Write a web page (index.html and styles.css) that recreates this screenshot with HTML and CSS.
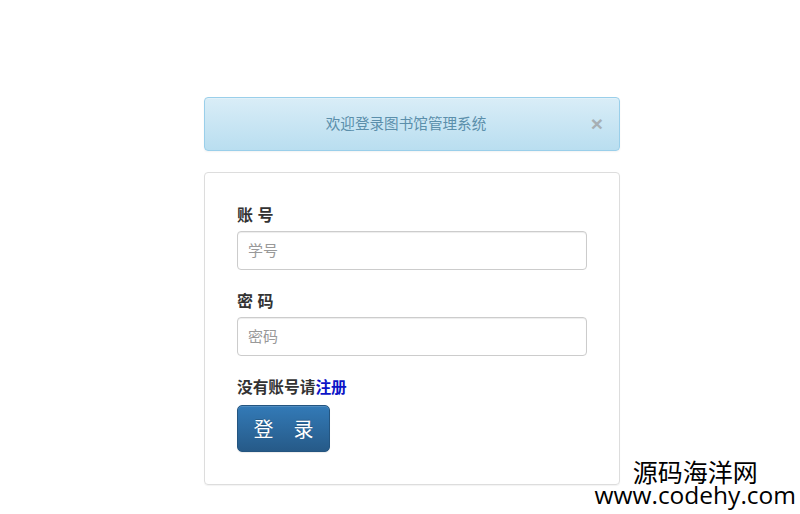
FILE: index.html
```html
<!DOCTYPE html>
<html lang="zh-CN">
<head>
    <meta charset="UTF-8">
    <meta name="viewport" content="width=device-width, initial-scale=1.0">
    <title>图书馆管理系统 - 登录</title>
    <link rel="stylesheet" href="styles.css">
</head>
<body>
    <div class="login-wrap">
        <div class="alert-info">
            欢迎登录图书馆管理系统
            <button class="close" type="button">&times;</button>
        </div>

        <form class="login-panel">
            <div class="form-group">
                <label>账 号</label>
                <input type="text" class="form-control" placeholder="学号">
            </div>
            <div class="form-group">
                <label>密 码</label>
                <input type="password" class="form-control" placeholder="密码">
            </div>
            <p class="register-tip">没有账号请<a href="#">注册</a></p>
            <button type="submit" class="btn-login">登　录</button>
        </form>
    </div>

    <div class="watermark">
        <div class="wm-name">源码海洋网</div>
        <div class="wm-url">www.codehy.com</div>
    </div>
</body>
</html>
```

FILE: styles.css
```css
* {
    margin: 0;
    padding: 0;
    box-sizing: border-box;
}

body {
    font-family: "Liberation Sans", "Noto Sans CJK SC", sans-serif;
    background: #fff;
    color: #333;
    width: 800px;
    height: 514px;
    position: relative;
    overflow: hidden;
}

.login-wrap {
    width: 416px;
    margin: 97px 0 0 204px;
}

.alert-info {
    position: relative;
    height: 54px;
    line-height: 52px;
    padding-right: 12px;
    text-align: center;
    font-size: 14.6px;
    color: #5b8fab;
    background: linear-gradient(to bottom, #d9edf7 0%, #b9def0 100%);
    border: 1px solid #9acfea;
    border-radius: 4px;
    box-shadow: inset 0 1px 0 rgba(255, 255, 255, 0.25), 0 1px 2px rgba(0, 0, 0, 0.05);
}

.close {
    position: absolute;
    right: 16px;
    top: 0;
    line-height: 52px;
    background: none;
    border: none;
    font-family: "Liberation Sans", sans-serif;
    font-size: 21px;
    font-weight: bold;
    color: #999;
    opacity: 0.7;
    cursor: pointer;
}

.login-panel {
    margin-top: 21px;
    padding: 33px 32px 32px;
    border: 1px solid #ddd;
    border-radius: 4px;
    box-shadow: 0 1px 1px rgba(0, 0, 0, 0.05);
}

.form-group {
    margin-bottom: 22px;
}

.form-group label {
    display: block;
    font-size: 16px;
    line-height: 20px;
    font-weight: bold;
    color: #333;
    margin-bottom: 5px;
}

.form-control {
    display: block;
    width: 100%;
    height: 39px;
    padding: 0 10px;
    font-family: "Liberation Sans", "Noto Sans CJK SC", sans-serif;
    font-size: 15px;
    color: #555;
    border: 1px solid #ccc;
    border-radius: 4px;
    box-shadow: inset 0 1px 1px rgba(0, 0, 0, 0.075);
}

.form-control::placeholder {
    color: #999;
}

.register-tip {
    font-size: 15.7px;
    line-height: 20px;
    font-weight: bold;
    color: #333;
    margin-bottom: 7px;
}

.register-tip a {
    color: #0b14c7;
    text-decoration: none;
}

.btn-login {
    width: 93px;
    height: 47px;
    font-family: "Liberation Sans", "Noto Sans CJK SC", sans-serif;
    font-size: 20px;
    color: #fff;
    background: linear-gradient(to bottom, #337ab7 0%, #265a88 100%);
    border: 1px solid #245580;
    border-radius: 5px;
    text-shadow: 0 -1px 0 rgba(0, 0, 0, 0.2);
    box-shadow: inset 0 1px 0 rgba(255, 255, 255, 0.15), 0 1px 1px rgba(0, 0, 0, 0.075);
    cursor: pointer;
}

.watermark {
    position: absolute;
    right: 4px;
    bottom: 8px;
    text-align: center;
    color: #000;
    font-family: "Noto Sans CJK SC", sans-serif;
}

.wm-name {
    font-size: 25px;
    line-height: 24px;
}

.wm-url {
    font-family: "Open Sans", "Liberation Sans", sans-serif;
    font-size: 24.5px;
    line-height: 23px;
}
```
